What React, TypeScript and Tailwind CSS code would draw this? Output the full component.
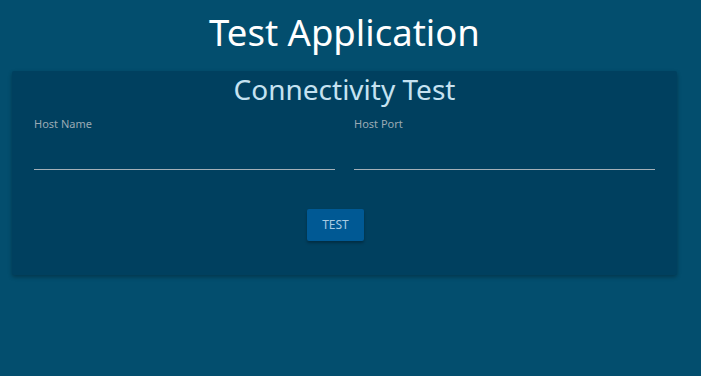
import React from "react";

const font = { fontFamily: '"Segoe UI", "Noto Sans", "Open Sans", sans-serif' };

const Field = ({ label }: { label: string }) => (
  <div className="flex-1 flex flex-col">
    <label className="text-[11px] leading-[14px] text-[#9aaab4]">{label}</label>
    <input
      className="mt-[11px] h-[28px] bg-transparent border-b border-[#a4b0b8] outline-none text-white text-sm"
      type="text"
    />
  </div>
);

export default function App() {
  return (
    <div className="w-full min-h-[376px] bg-[#034e6e] pt-[9px] pl-3 pr-6" style={font}>
      <h1 className="text-center text-white text-[36.5px] leading-[46px]">Test Application</h1>
      <div className="mt-[16px] bg-[#00405f] shadow-[0_2px_4px_rgba(0,0,0,0.3)] rounded-[2px] px-[22px] pt-[1px] pb-[34px]">
        <h2 className="text-center text-[#c5e2f1] text-[28px] leading-[34px]">Connectivity Test</h2>
        <div className="mt-[11px] flex gap-[19px]">
          <Field label="Host Name" />
          <Field label="Host Port" />
        </div>
        <div className="mt-[39px] flex justify-center">
          <button className="mr-[18px] h-[32px] px-[15px] rounded-[2px] bg-[#005994] text-[#a9cbe2] text-[12px] shadow-[0_2px_3px_rgba(0,0,0,0.3)]">
            TEST
          </button>
        </div>
      </div>
    </div>
  );
}
